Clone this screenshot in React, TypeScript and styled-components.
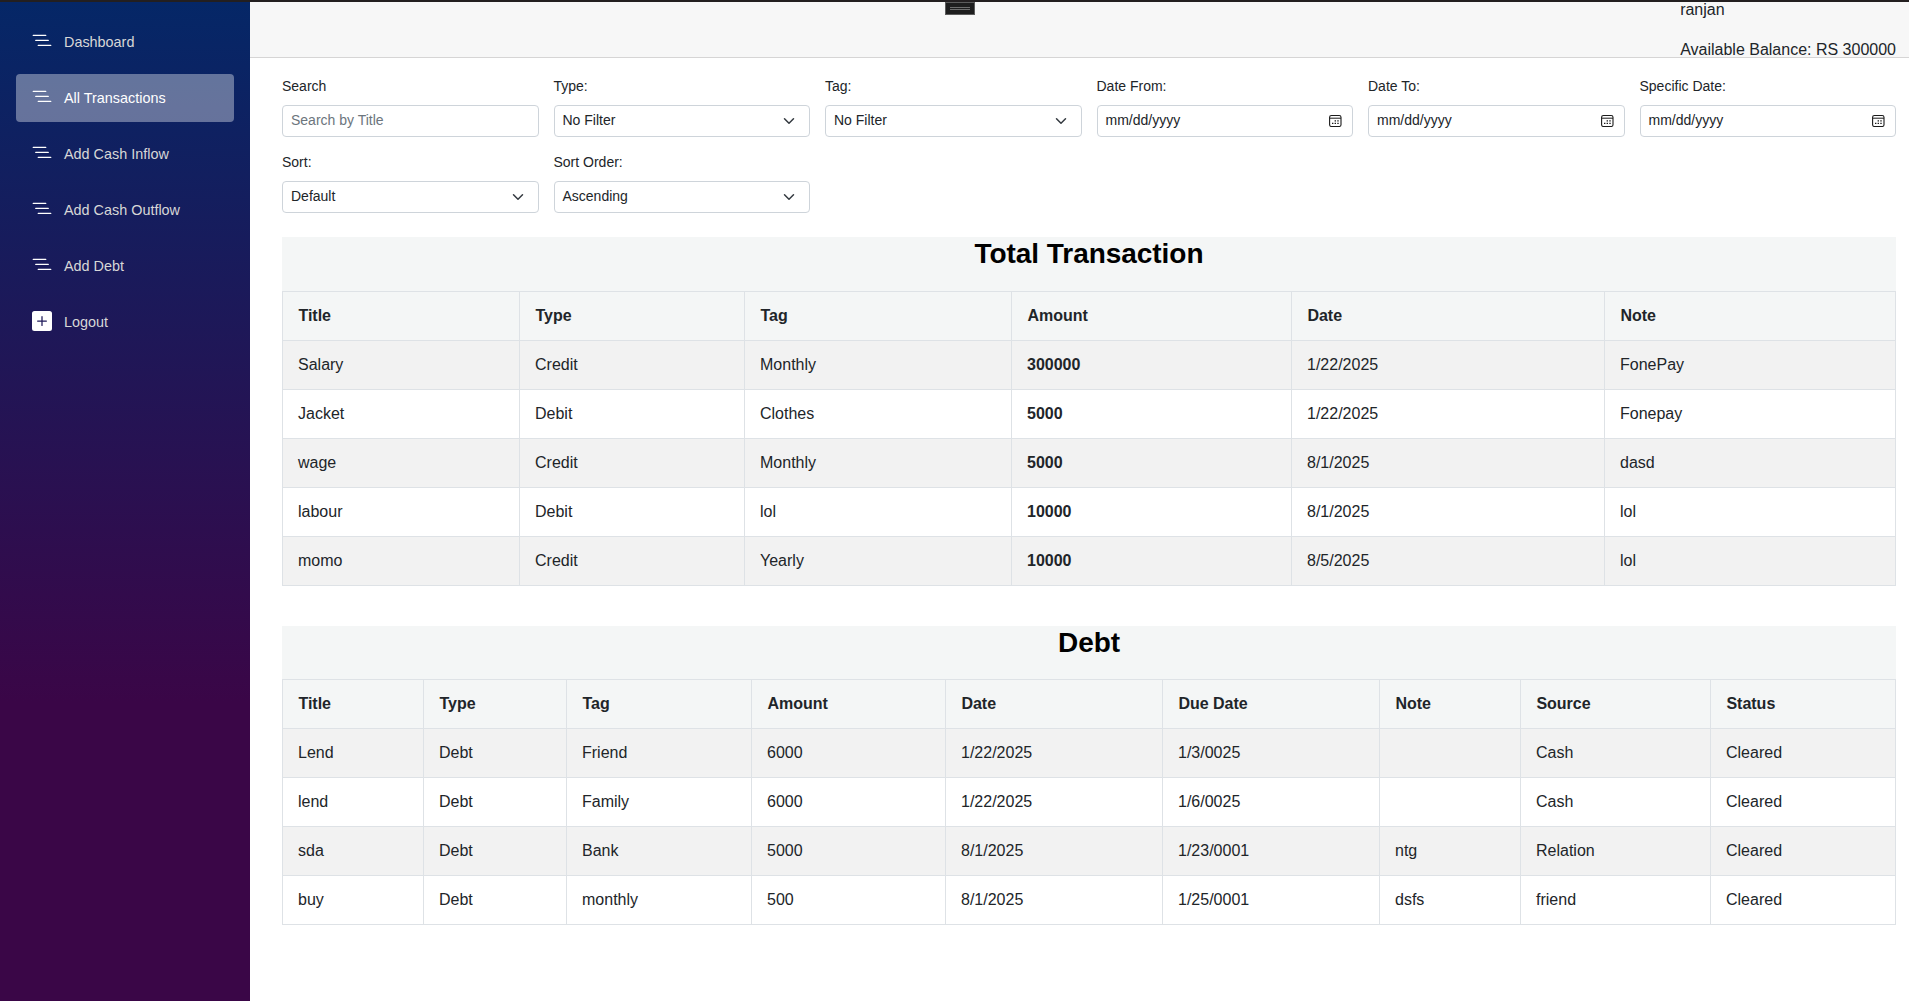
import React from "react";
import styled, { createGlobalStyle, css } from "styled-components";

const GlobalStyle = createGlobalStyle`
  *, *::before, *::after { box-sizing: border-box; }
  html, body { margin: 0; padding: 0; background: #fff; overflow: hidden; }
  body { font-family: "Liberation Sans", Arial, sans-serif; font-size: 16px; line-height: 1.5; color: #212529; }
`;

const Window = styled.div`
  position: relative;
  display: flex;
  flex-direction: column;
  height: 100vh;
`;

const TitleStrip = styled.div`
  flex: none;
  height: 2px;
  background: #231f20;
  z-index: 1;
`;

const Handle = styled.div`
  position: absolute;
  z-index: 2;
  top: 2px;
  left: 945px;
  width: 30px;
  height: 13px;
  padding: 4px 4px;
  background: #1e1e1e;
  border: 1px solid #5c5c5c;

  &::before {
    content: "";
    display: block;
    height: 3px;
    border: solid #6e6e6e;
    border-width: 1px 0;
  }
`;

const Page = styled.div`
  flex: 1;
  min-height: 0;
  display: flex;
`;

const Sidebar = styled.nav`
  flex: none;
  width: 250px;
  padding: 16px;
  display: flex;
  flex-direction: column;
  gap: 8px;
  background: linear-gradient(180deg, rgb(5, 39, 103) 0%, #3a0647 70%);
`;

const NavItem = styled.a<{ $active?: boolean }>`
  display: flex;
  align-items: center;
  height: 48px;
  padding: 2px 16px 0;
  border-radius: 4px;
  font-size: 14.4px;
  color: #d7d7d7;
  ${(p) => p.$active && css`
    background: rgba(255, 255, 255, 0.37);
    color: #fff;
  `}
`;

const NavIcon = styled.svg`
  width: 20px;
  height: 20px;
  margin: 0 12px 4px 0;
  fill: #fff;
`;

const Main = styled.main`
  flex: 1;
  min-width: 0;
  display: flex;
  flex-direction: column;
`;

const TopRow = styled.header`
  flex: none;
  height: 56px;
  padding: 0 13px;
  display: flex;
  justify-content: flex-end;
  align-items: center;
  background: #f7f7f7;
  border-bottom: 1px solid #d6d5d5;
`;

const Account = styled.div`
  display: flex;
  flex-direction: column;
  gap: 16px;
`;

const Content = styled.div`
  padding: 18px 13px 0 32px;
`;

const Filters = styled.form`
  display: grid;
  grid-template-columns: repeat(6, 1fr);
  gap: 15px;
  font-size: 14px;
`;

const Field = styled.label`
  display: flex;
  flex-direction: column;
  gap: 8px;
`;

const Control = styled.span<{ $muted?: boolean; $end: number }>`
  display: flex;
  align-items: center;
  justify-content: space-between;
  height: 32px;
  padding: 0 ${(p) => p.$end}px 1px 8px;
  border: 1px solid #ced4da;
  border-radius: 4px;
  color: ${(p) => (p.$muted ? "#6c757d" : "#212529")};
`;

const Glyph = styled.svg<{ $size: number }>`
  width: ${(p) => p.$size}px;
  height: ${(p) => p.$size}px;
`;

const Panel = styled.section<{ $top: number }>`
  margin-top: ${(p) => p.$top}px;
  background: #f4f6f6;
`;

const PanelTitle = styled.h3<{ $height: number }>`
  margin: 0;
  height: ${(p) => p.$height}px;
  text-align: center;
  font-size: 28px;
  line-height: 33.6px;
  letter-spacing: -0.05px;
  font-weight: 700;
  color: #000;
`;

const Table = styled.table`
  width: 100%;
  table-layout: fixed;
  border-collapse: collapse;
`;

const Col = styled.col<{ $w?: number }>`
  width: ${(p) => (p.$w ? `${p.$w}px` : "auto")};
`;

const HeadCell = styled.th`
  height: 49px;
  padding: 0 15.4px;
  border: 1px solid #dee2e6;
  text-align: left;
  font-weight: 700;
`;

const Row = styled.tr`
  background: #fff;
  &:nth-child(odd) { background: #f2f2f2; }
`;

const Cell = styled.td<{ $bold?: boolean }>`
  height: 49px;
  padding: 0 15px;
  border: 1px solid #dee2e6;
  font-weight: ${(p) => (p.$bold ? 700 : 400)};
`;

const NestedList = () => (
  <NavIcon viewBox="0 0 16 16">
    <path fillRule="evenodd" d="M4.5 11.5A.5.5 0 0 1 5 11h10a.5.5 0 0 1 0 1H5a.5.5 0 0 1-.5-.5zm-2-4A.5.5 0 0 1 3 7h10a.5.5 0 0 1 0 1H3a.5.5 0 0 1-.5-.5zm-2-4A.5.5 0 0 1 1 3h10a.5.5 0 0 1 0 1H1a.5.5 0 0 1-.5-.5z" />
  </NavIcon>
);

const PlusSquare = () => (
  <NavIcon viewBox="0 0 16 16">
    <path d="M2 0a2 2 0 0 0-2 2v12a2 2 0 0 0 2 2h12a2 2 0 0 0 2-2V2a2 2 0 0 0-2-2H2zm6.5 4.5v3h3a.5.5 0 0 1 0 1h-3v3a.5.5 0 0 1-1 0v-3h-3a.5.5 0 0 1 0-1h3v-3a.5.5 0 0 1 1 0z" />
  </NavIcon>
);

const Chevron = () => (
  <Glyph $size={12} viewBox="0 0 16 16">
    <path fill="none" stroke="#343a40" strokeLinecap="round" strokeLinejoin="round" strokeWidth="2" d="m2 5 6 6 6-6" />
  </Glyph>
);

const Calendar = () => (
  <Glyph $size={13} viewBox="0 0 13 13">
    <rect x="0.6" y="1.5" width="11.4" height="11" rx="1.8" fill="none" stroke="#1b1b1b" strokeWidth="1.1" />
    <path d="M1 4.2h11" stroke="#1b1b1b" strokeWidth="1" />
    <path d="M5.6 6.2h1.4v1.4H5.6zM8.3 6.2h1.4v1.4H8.3zM3 8.7h1.4v1.4H3zM5.6 8.7h1.4v1.4H5.6zM8.3 8.7h1.4v1.4H8.3z" fill="#1b1b1b" />
  </Glyph>
);

type FieldKind = "text" | "select" | "date";

const fields: { label: string; value: string; kind: FieldKind }[] = [
  { label: "Search", value: "Search by Title", kind: "text" },
  { label: "Type:", value: "No Filter", kind: "select" },
  { label: "Tag:", value: "No Filter", kind: "select" },
  { label: "Date From:", value: "mm/dd/yyyy", kind: "date" },
  { label: "Date To:", value: "mm/dd/yyyy", kind: "date" },
  { label: "Specific Date:", value: "mm/dd/yyyy", kind: "date" },
  { label: "Sort:", value: "Default", kind: "select" },
  { label: "Sort Order:", value: "Ascending", kind: "select" },
];

const navItems = ["Dashboard", "All Transactions", "Add Cash Inflow", "Add Cash Outflow", "Add Debt", "Logout"];

const transactions = {
  widths: [237, 225, 267, 280, 313],
  head: ["Title", "Type", "Tag", "Amount", "Date", "Note"],
  rows: [
    ["Salary", "Credit", "Monthly", "300000", "1/22/2025", "FonePay"],
    ["Jacket", "Debit", "Clothes", "5000", "1/22/2025", "Fonepay"],
    ["wage", "Credit", "Monthly", "5000", "8/1/2025", "dasd"],
    ["labour", "Debit", "lol", "10000", "8/1/2025", "lol"],
    ["momo", "Credit", "Yearly", "10000", "8/5/2025", "lol"],
  ],
};

const debts = {
  widths: [141, 143, 185, 194, 217, 217, 141, 190],
  head: ["Title", "Type", "Tag", "Amount", "Date", "Due Date", "Note", "Source", "Status"],
  rows: [
    ["Lend", "Debt", "Friend", "6000", "1/22/2025", "1/3/0025", "", "Cash", "Cleared"],
    ["lend", "Debt", "Family", "6000", "1/22/2025", "1/6/0025", "", "Cash", "Cleared"],
    ["sda", "Debt", "Bank", "5000", "8/1/2025", "1/23/0001", "ntg", "Relation", "Cleared"],
    ["buy", "Debt", "monthly", "500", "8/1/2025", "1/25/0001", "dsfs", "friend", "Cleared"],
  ],
};

function DataTable({ data, boldColumn }: { data: typeof debts; boldColumn?: number }) {
  return (
    <Table>
      <colgroup>
        {data.head.map((h, i) => <Col key={h} $w={data.widths[i]} />)}
      </colgroup>
      <thead>
        <tr>{data.head.map((h) => <HeadCell key={h}>{h}</HeadCell>)}</tr>
      </thead>
      <tbody>
        {data.rows.map((row, r) => (
          <Row key={r}>
            {row.map((value, c) => <Cell key={c} $bold={c === boldColumn}>{value}</Cell>)}
          </Row>
        ))}
      </tbody>
    </Table>
  );
}

export default function App() {
  return (
    <Window>
      <GlobalStyle />
      <TitleStrip />
      <Handle />
      <Page>
        <Sidebar>
          {navItems.map((name) => (
            <NavItem key={name} $active={name === "All Transactions"}>
              {name === "Logout" ? <PlusSquare /> : <NestedList />}
              {name}
            </NavItem>
          ))}
        </Sidebar>
        <Main>
          <TopRow>
            <Account>
              <span>ranjan</span>
              <span>Available Balance: RS 300000</span>
            </Account>
          </TopRow>
          <Content>
            <Filters>
              {fields.map((f) => (
                <Field key={f.label}>
                  {f.label}
                  <Control $muted={f.kind === "text"} $end={f.kind === "select" ? 14 : 10}>
                    {f.value}
                    {f.kind === "select" && <Chevron />}
                    {f.kind === "date" && <Calendar />}
                  </Control>
                </Field>
              ))}
            </Filters>
            <Panel $top={24}>
              <PanelTitle $height={54}>Total Transaction</PanelTitle>
              <DataTable data={transactions} boldColumn={3} />
            </Panel>
            <Panel $top={40}>
              <PanelTitle $height={53}>Debt</PanelTitle>
              <DataTable data={debts} />
            </Panel>
          </Content>
        </Main>
      </Page>
    </Window>
  );
}
